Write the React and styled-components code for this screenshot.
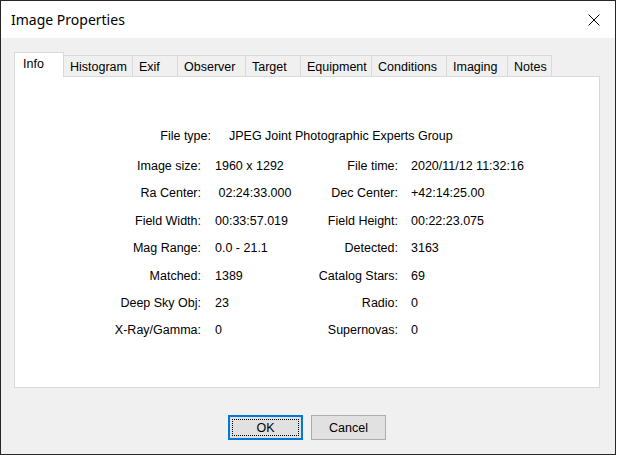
import React from "react";
import styled, { createGlobalStyle } from "styled-components";

const Global = createGlobalStyle`
  html, body { margin: 0; padding: 0; background: #ffffff; }
  body { width: 621px; height: 462px; overflow: hidden; }
`;

const Window = styled.div`
  width: 616px;
  height: 455px;
  box-sizing: border-box;
  border: 1px solid #262626;
  display: flex;
  flex-direction: column;
  background: #f0f0f0;
  font-family: "Liberation Sans", Arial, sans-serif;
  font-size: 12.5px;
  color: #000;
`;

const TitleBar = styled.div`
  height: 37px;
  flex: none;
  background: #ffffff;
  display: flex;
  align-items: center;
  padding-left: 10px;
  padding-right: 15px;
`;

const Title = styled.div`
  font-family: "Noto Sans", "Open Sans", sans-serif;
  font-size: 14px;
  color: #000;
`;

const CloseButton = styled.div`
  margin-left: auto;
  width: 12px;
  height: 12px;
  display: flex;
`;

const Body = styled.div`
  flex: none;
  padding: 14px 15px 0 13px;
  display: flex;
  flex-direction: column;
`;

const TabStrip = styled.div`
  display: flex;
  align-items: flex-end;
  height: 24px;
  position: relative;
  z-index: 1;
`;

const Tab = styled.div`
  box-sizing: border-box;
  width: ${(p) => p.$w}px;
  height: ${(p) => (p.$active ? 25 : 21)}px;
  margin-bottom: ${(p) => (p.$active ? -1 : 0)}px;
  margin-left: ${(p) => (p.$first ? 0 : -1)}px;
  border: 1px solid #d9d9d9;
  border-bottom: none;
  background: ${(p) => (p.$active ? "#ffffff" : "#f0f0f0")};
  padding-left: ${(p) => (p.$active ? 8 : 6)}px;
  line-height: ${(p) => (p.$active ? 23 : 23)}px;
  white-space: nowrap;
  overflow: hidden;
  position: relative;
  z-index: ${(p) => (p.$active ? 2 : 1)};
`;

const Panel = styled.div`
  box-sizing: border-box;
  height: 312px;
  background: #ffffff;
  border: 1px solid #d9d9d9;
  padding-top: 44px;
`;

const HeaderRow = styled.div`
  display: grid;
  grid-template-columns: 214px 1fr;
  height: 32px;
  line-height: 30px;
`;

const InfoGrid = styled.div`
  display: grid;
  grid-template-columns: 200px 85px 111px 1fr;
  grid-auto-rows: 27.4px;
  line-height: 27.4px;
`;

const Label = styled.div`
  text-align: right;
  padding-right: ${(p) => p.$pad}px;
  white-space: nowrap;
`;

const Value = styled.div`
  white-space: pre;
`;

const Footer = styled.div`
  flex: none;
  display: flex;
  justify-content: center;
  gap: 8px;
  padding-top: 27px;
  padding-right: 2px;
`;

const Button = styled.div`
  box-sizing: border-box;
  width: 75px;
  height: 25px;
  background: #e1e1e1;
  border: ${(p) => (p.$default ? "2px solid #0078d7" : "1px solid #adadad")};
  display: flex;
  align-items: center;
  justify-content: center;
  position: relative;
  &::after {
    content: "";
    display: ${(p) => (p.$default ? "block" : "none")};
    position: absolute;
    inset: 2px;
    border: 1px dotted #000;
  }
`;

const tabs = [
  ["Info", 50],
  ["Histogram", 70],
  ["Exif", 46],
  ["Observer", 69],
  ["Target", 56],
  ["Equipment", 72],
  ["Conditions", 76],
  ["Imaging", 62],
  ["Notes", 45],
];

const rows = [
  ["Image size:", "1960 x 1292", "File time:", "2020/11/12 11:32:16"],
  ["Ra Center:", " 02:24:33.000", "Dec Center:", "+42:14:25.00"],
  ["Field Width:", "00:33:57.019", "Field Height:", "00:22:23.075"],
  ["Mag Range:", "0.0 - 21.1", "Detected:", "3163"],
  ["Matched:", "1389", "Catalog Stars:", "69"],
  ["Deep Sky Obj:", "23", "Radio:", "0"],
  ["X-Ray/Gamma:", "0", "Supernovas:", "0"],
];

export default function App() {
  return (
    <>
      <Global />
      <Window>
        <TitleBar>
          <Title>Image Properties</Title>
          <CloseButton>
            <svg width="12" height="12" viewBox="0 0 12 12">
              <path d="M0.5 0.5 L11.5 11.5 M11.5 0.5 L0.5 11.5" stroke="#000" strokeWidth="1" fill="none" />
            </svg>
          </CloseButton>
        </TitleBar>
        <Body>
          <TabStrip>
            {tabs.map(([t, w], i) => (
              <Tab key={t} $w={w} $first={i === 0} $active={i === 0}>
                {t}
              </Tab>
            ))}
          </TabStrip>
          <Panel>
            <HeaderRow>
              <Label $pad={18}>File type:</Label>
              <Value>JPEG Joint Photographic Experts Group</Value>
            </HeaderRow>
            <InfoGrid>
              {rows.map(([l1, v1, l2, v2]) => (
                <React.Fragment key={l1}>
                  <Label $pad={14}>{l1}</Label>
                  <Value>{v1}</Value>
                  <Label $pad={13}>{l2}</Label>
                  <Value>{v2}</Value>
                </React.Fragment>
              ))}
            </InfoGrid>
          </Panel>
        </Body>
        <Footer>
          <Button $default>OK</Button>
          <Button>Cancel</Button>
        </Footer>
      </Window>
    </>
  );
}
